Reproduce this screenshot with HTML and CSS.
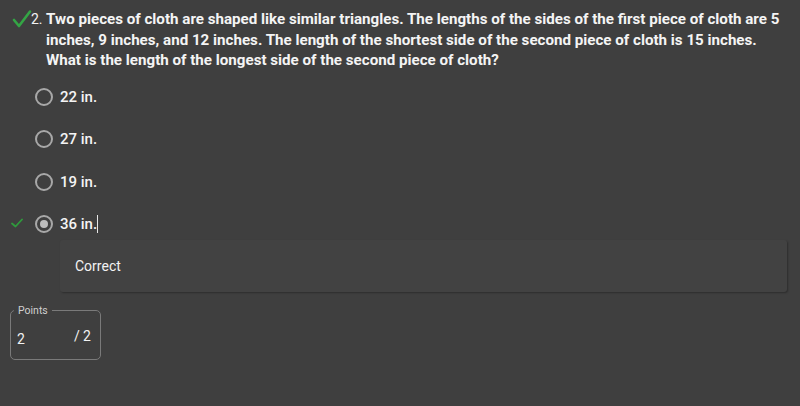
FILE: index.html
```html
<!DOCTYPE html>
<html lang="en">
<head>
  <meta charset="UTF-8">
  <meta name="viewport" content="width=device-width, initial-scale=1.0">
  <title>Question 2</title>
  <link rel="stylesheet" href="styles.css">
</head>
<body>
  <div class="question">
    <div class="question-head">
      <svg class="check-big" width="20" height="20" viewBox="0 0 20 20">
        <path d="M2 11 L7 17 L18 2.5" fill="none" stroke="#34a545" stroke-width="2.6" stroke-linecap="round" stroke-linejoin="round"/>
      </svg>
      <span class="num">2.</span>
      <p class="prompt">Two pieces of cloth are shaped like similar triangles. The lengths of the sides of the first piece of cloth are 5<br>inches, 9 inches, and 12 inches. The length of the shortest side of the second piece of cloth is 15 inches.<br>What is the length of the longest side of the second piece of cloth?</p>
    </div>

    <ul class="options">
      <li class="option">
        <span class="mark"></span>
        <span class="radio"></span>
        <span class="label">22 in.</span>
      </li>
      <li class="option">
        <span class="mark"></span>
        <span class="radio"></span>
        <span class="label">27 in.</span>
      </li>
      <li class="option">
        <span class="mark"></span>
        <span class="radio"></span>
        <span class="label">19 in.</span>
      </li>
      <li class="option selected">
        <span class="mark">
          <svg width="12" height="10" viewBox="0 0 12 10">
            <path d="M1 5.5 L4.5 8.5 L11 1.5" fill="none" stroke="#2f9a3c" stroke-width="1.8" stroke-linecap="round" stroke-linejoin="round"/>
          </svg>
        </span>
        <span class="radio"></span>
        <span class="label">36 in.<span class="caret"></span></span>
      </li>
    </ul>

    <div class="feedback">Correct</div>

    <fieldset class="points">
      <legend>Points</legend>
      <span class="score">2</span>
      <span class="total">/ 2</span>
    </fieldset>
  </div>
</body>
</html>
```

FILE: styles.css
```css
body {
  margin: 0;
  background-color: #3f3f3f;
  font-family: Roboto, "Liberation Sans", sans-serif;
  color: #f2f2f2;
}

.question {
  padding: 9px 0 0 0;
}

.question-head {
  display: flex;
  align-items: flex-start;
  padding-left: 12px;
}

.check-big {
  flex: none;
}

.num {
  flex: none;
  width: 15px;
  font-size: 14px;
  line-height: 20.5px;
  margin-left: -1px;
}

.prompt {
  margin: 0;
  font-size: 15.15px;
  font-weight: 700;
  line-height: 20.5px;
  color: #f4f4f4;
  white-space: nowrap;
}

.options {
  list-style: none;
  margin: 5px 0 0 0;
  padding: 0;
}

.option {
  display: flex;
  align-items: center;
  height: 42.5px;
}

.mark {
  width: 35px;
  display: flex;
  justify-content: flex-end;
}

.mark svg {
  margin-right: 12px;
  margin-top: -2px;
}

.radio {
  flex: none;
  width: 14px;
  height: 14px;
  border: 2px solid #a8a8a8;
  border-radius: 50%;
  position: relative;
}

.option.selected .radio::after {
  content: "";
  position: absolute;
  left: 3px;
  top: 3px;
  width: 8px;
  height: 8px;
  border-radius: 50%;
  background: #bdbdbd;
}

.label {
  margin-left: 7px;
  font-size: 15px;
  font-weight: 500;
  color: #f4f4f4;
  display: flex;
  align-items: center;
}

.caret {
  display: inline-block;
  width: 1px;
  height: 18px;
  background: #e6e6e6;
}

.feedback {
  margin: -6px 13px 0 60px;
  height: 52px;
  padding-left: 15px;
  display: flex;
  align-items: center;
  font-size: 14px;
  color: #f2f2f2;
  background: #424242;
  box-shadow: 1px 1px 2px rgba(0, 0, 0, 0.3);
  border-radius: 3px;
}

.points {
  margin: 14px 0 0 10px;
  width: 91px;
  height: 54px;
  box-sizing: border-box;
  border: 1px solid #7a7a7a;
  border-radius: 5px;
  padding: 0 9px 0 6px;
  display: flex;
  justify-content: space-between;
  align-items: center;
}

.points legend {
  font-size: 10.5px;
  color: #cfcfcf;
  padding: 0 4px;
  margin-left: -3px;
  line-height: 10px;
}

.score {
  font-size: 14px;
  color: #f2f2f2;
  margin-top: 3px;
}

.total {
  font-size: 14px;
  color: #f2f2f2;
  margin-top: -3px;
}
```
